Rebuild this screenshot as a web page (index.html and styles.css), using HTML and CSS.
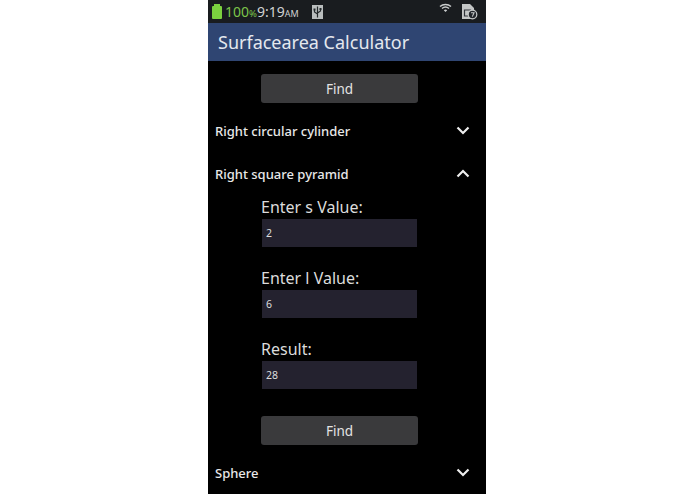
FILE: index.html
```html
<!DOCTYPE html>
<html lang="en">

<head>
    <meta charset="UTF-8">
    <title>Surfacearea Calculator</title>
    <link rel="stylesheet" href="styles.css">
</head>

<body>
    <div class="phone">
        <!-- status bar -->
        <div class="status">
            <span class="battery"></span>
            <span class="percent">100<small>%</small></span>
            <span class="clock">9:19<small>AM</small></span>
            <span class="usb">
                <svg width="11" height="14" viewBox="0 0 11 14">
                    <rect width="11" height="14" fill="#b9bdbd"/>
                    <path d="M5.500 1.500v11M5.500 9L2.500 7V5M5.500 8l3-2V4.500" fill="none" stroke="#23282a" stroke-width="1.200"/>
                    <rect x="1.500" y="3.500" width="2" height="2" fill="#23282a"/>
                    <rect x="7.500" y="3" width="2" height="2" fill="#23282a"/>
                </svg>
            </span>
            <span class="status-right">
                <svg class="wifi" width="13" height="10" viewBox="0 0 13 10">
                    <path d="M1 3.500C4 .8 9 .8 12 3.500M3 5.500C5 3.800 8 3.800 10 5.500" fill="none" stroke="#c9cccc" stroke-width="1.500"/>
                    <path d="M4.800 7.200C5.800 6.400 7.200 6.400 8.200 7.200L6.500 9z" fill="#c9cccc"/>
                </svg>
                <svg class="sim" width="17" height="17" viewBox="0 0 17 17">
                    <path d="M1 1h8l4 4v11H1z" fill="#c4c7c7"/>
                    <path d="M3.500 7h6v6h-6z" fill="none" stroke="#30343a" stroke-width="1.200"/>
                    <circle cx="11.500" cy="11.500" r="4.300" fill="#23272c" stroke="#c4c7c7" stroke-width="1.200"/>
                    <path d="M10 9.800h3l-1.700 3.800" fill="none" stroke="#c4c7c7" stroke-width="1.100"/>
                </svg>
            </span>
        </div>

        <div class="titlebar">Surfacearea Calculator</div>

        <div class="content">
            <div class="btn-row first"><button class="find">Find</button></div>

            <div class="section">
                <span>Right circular cylinder</span>
                <svg class="chev" width="14" height="9" viewBox="0 0 14 9"><path d="M1.500 1.500L7 7l5.500-5.500"/></svg>
            </div>

            <div class="section open">
                <span>Right square pyramid</span>
                <svg class="chev" width="14" height="9" viewBox="0 0 14 9"><path d="M1.500 7.500L7 2l5.500 5.500"/></svg>
            </div>

            <div class="form">
                <label>Enter s Value:</label>
                <div class="field">2</div>
                <label>Enter l Value:</label>
                <div class="field">6</div>
                <label>Result:</label>
                <div class="field">28</div>
            </div>

            <div class="btn-row"><button class="find">Find</button></div>

            <div class="section last">
                <span>Sphere</span>
                <svg class="chev" width="14" height="9" viewBox="0 0 14 9"><path d="M1.500 1.500L7 7l5.500-5.500"/></svg>
            </div>
        </div>
    </div>
</body>

</html>
```

FILE: styles.css
```css
html,
body {
    margin: 0;
    padding: 0;
    height: 100%;
    background: #fff;
}

body {
    font-family: "Noto Sans", "Open Sans", sans-serif;
    overflow: hidden;
}

.phone {
    width: 278px;
    height: 494px;
    margin-left: 208px;
    background: #000;
    color: #e6e6e6;
    overflow: hidden;
}

/* status bar */
.status {
    height: 23px;
    background: #191c1f;
    display: flex;
    align-items: center;
    padding-left: 4px;
    box-sizing: border-box;
}

.battery {
    position: relative;
    width: 10px;
    height: 13px;
    margin-top: 2px;
    background: #7bd13f;
    border-radius: 1px;
}

.battery::before {
    content: "";
    position: absolute;
    top: -2px;
    left: 2px;
    width: 6px;
    height: 2px;
    background: #7bd13f;
}

.percent {
    margin-left: 3px;
    font-size: 14px;
    color: #7cc54a;
}

.percent small {
    font-size: 9.500px;
}

.clock {
    font-size: 14px;
    color: #d0d2d2;
}

.clock small {
    font-size: 9px;
}

.usb {
    margin-left: 13px;
    height: 14px;
    line-height: 0;
}

.status-right {
    margin-left: auto;
    display: flex;
    align-items: center;
    gap: 9px;
    padding-right: 8px;
}

.wifi {
    margin-top: -7px;
}

.titlebar {
    height: 38px;
    line-height: 38px;
    padding-left: 10px;
    background: #2f4572;
    font-size: 18px;
    color: #e4e8ee;
}

.content {
    display: flex;
    flex-direction: column;
}

.btn-row {
    padding-left: 53px;
    margin-top: 27px;
}

.btn-row.first {
    margin-top: 13px;
}

.find {
    display: block;
    width: 157px;
    height: 29px;
    padding: 0;
    border: 0;
    border-radius: 3px;
    background: #3a3a3c;
    color: #e4e4e4;
    font-family: inherit;
    font-size: 13.500px;
}

.section {
    display: flex;
    justify-content: space-between;
    align-items: center;
    height: 20px;
    margin-top: 18px;
    padding: 0 16px 0 7px;
    font-size: 13px;
    font-weight: 500;
    color: #e8e8e8;
}

.section.open {
    margin-top: 23px;
}

.section.last {
    margin-top: 18px;
}

.chev {
    margin-top: -2px;
}

.chev path {
    fill: none;
    stroke: #eee;
    stroke-width: 2.200;
}

.form {
    display: flex;
    flex-direction: column;
    padding-left: 53px;
    margin-top: 11px;
}

.form label {
    height: 24px;
    line-height: 24px;
    font-size: 16px;
    color: #dcdcdc;
}

.field {
    width: 155px;
    height: 28px;
    line-height: 28px;
    margin: 0 0 19px 1px;
    padding-left: 4px;
    box-sizing: border-box;
    background: #24222f;
    font-size: 10.500px;
    color: #ddd;
}

.form .field:last-child {
    margin-bottom: 0;
}
```
